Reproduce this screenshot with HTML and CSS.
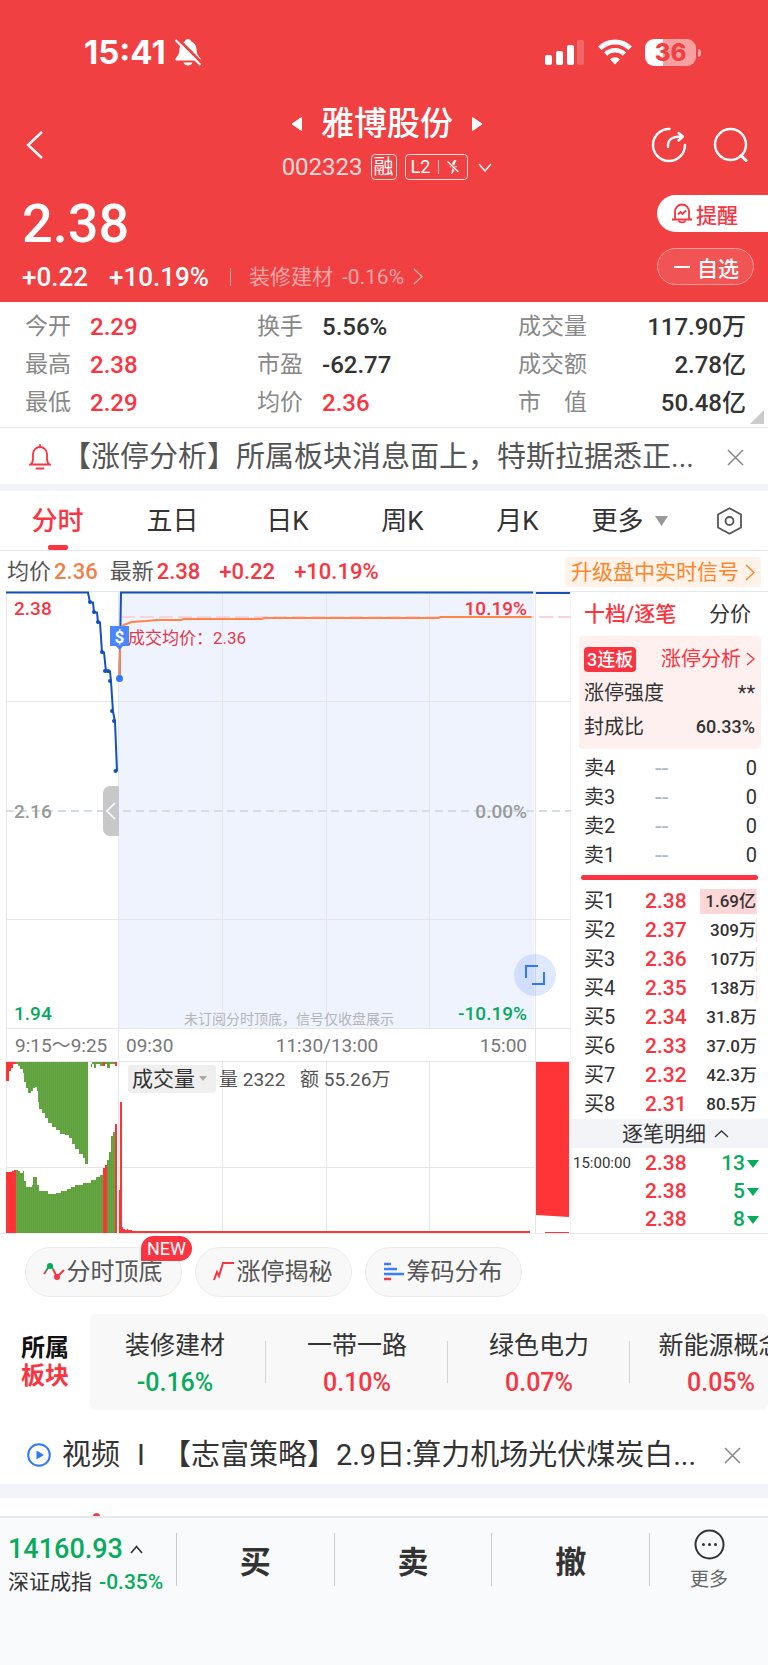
FILE: index.html
```html
<!DOCTYPE html>
<html lang="zh-CN">
<head>
    <meta charset="UTF-8">
    <meta name="viewport" content="width=device-width, initial-scale=1.0">
    <title>雅博股份 002323</title>
    <link rel="stylesheet" href="styles.css">
</head>
<body>
    <header class="header">
        <div class="status-bar">
            <div class="status-left">
                <span class="clock">15:41</span>
                <svg width="28" height="28" viewBox="0 0 28 28">
                    <path d="M14 1c-1.800 0-3 1.200-3.200 2.400C7 5 5.600 8 5.400 12c-.2 4-1.200 5.500-3.600 8-1 1-.6 2.500.8 2.500h22.800c1.400 0 1.800-1.500.8-2.500-2.400-2.500-3.400-4-3.600-8-.2-4-1.600-7-5.400-8.600C17 2.200 15.800 1 14 1z" fill="#fff"/>
                    <path d="M9.500 24.500h9c-.6 1.800-2.400 3-4.500 3s-3.900-1.200-4.500-3z" fill="#fff"/>
                    <path d="M3 0l25 25" stroke="#f04041" stroke-width="3"/>
                    <path d="M1.500 2l25 25" stroke="#fff" stroke-width="2.200"/>
                </svg>
            </div>
            <div class="status-right">
                <svg width="40" height="26" viewBox="0 0 40 26" fill="#fff">
                    <rect x="0" y="16" width="7" height="10" rx="2"/>
                    <rect x="11" y="12" width="7" height="14" rx="2"/>
                    <rect x="22" y="6" width="7" height="20" rx="2"/>
                    <rect x="32" y="1" width="7" height="25" rx="2" opacity=".2"/>
                </svg>
                <svg width="34" height="26" viewBox="0 0 34 26">
                    <path d="M1.800 9.200a21.500 21.500 0 0 1 30.400 0" fill="none" stroke="#fff" stroke-width="5"/>
                    <path d="M7.600 15.200a13.300 13.300 0 0 1 18.800 0" fill="none" stroke="#fff" stroke-width="4.600"/>
                    <path d="M17 25.500l-5-5.200a7 7 0 0 1 10 0z" fill="#fff"/>
                </svg>
                <div class="battery"><span>36</span></div>
            </div>
        </div>

        <nav class="nav">
            <button class="icon-btn" type="button" aria-label="返回">
                <svg width="18" height="30" viewBox="0 0 18 30"><path d="M16 2L2 15l14 13" fill="none" stroke="#fff" stroke-width="2.400"/></svg>
            </button>
            <div class="stock">
                <div class="stock-name">
                    <button class="icon-btn" type="button" aria-label="上一只">
                        <svg width="12" height="16" viewBox="0 0 12 16"><path d="M10.500 1.500v13L1 8z" fill="#fff" stroke="#fff" stroke-linejoin="round"/></svg>
                    </button>
                    <h1>雅博股份</h1>
                    <button class="icon-btn" type="button" aria-label="下一只">
                        <svg width="12" height="16" viewBox="0 0 12 16"><path d="M1.500 1.500v13L11 8z" fill="#fff" stroke="#fff" stroke-linejoin="round"/></svg>
                    </button>
                </div>
                <div class="stock-code">
                    <span>002323</span>
                    <span class="tag tag-margin">融</span>
                    <span class="tag tag-l2">L2
                        <i></i>
                        <svg width="12" height="16" viewBox="0 0 12 16"><path d="M7.500 1L3 8h3L4.500 15 9.500 7.500H6.500L9 1" fill="#fff" stroke="#fff" stroke-width=".6"/><path d="M.5 2.500l11 10.500" stroke="#f04041" stroke-width="3"/><path d="M.5 2.500l11 10.500" stroke="#fff" stroke-width="1.300"/></svg>
                    </span>
                    <svg width="14" height="9" viewBox="0 0 14 9"><path d="M1 1l6 7 6-7" fill="none" stroke="#fff" stroke-width="1.400"/></svg>
                </div>
            </div>
            <div class="nav-actions">
                <button class="icon-btn" type="button" aria-label="分享">
                    <svg width="36" height="36" viewBox="0 0 36 36" fill="none" stroke="#fff" stroke-width="2.400" stroke-linecap="round" stroke-linejoin="round">
                        <path d="M18.500 2A16 16 0 1 0 34 18"/>
                        <path d="M17 20c-.5-7 3-10.500 14-10.500M27.500 6l4.500 3.500-4.500 4"/>
                    </svg>
                </button>
                <button class="icon-btn" type="button" aria-label="搜索">
                    <svg width="36" height="36" viewBox="0 0 36 36" fill="none" stroke="#fff" stroke-width="2.400" stroke-linecap="round">
                        <circle cx="18.500" cy="17.500" r="15.500"/>
                        <path d="M29 28.500l5 5" stroke-width="3"/>
                    </svg>
                </button>
            </div>
        </nav>

        <div class="quote">
            <div class="quote-main">
                <div class="price">2.38</div>
                <div class="change">
                    <span>+0.22</span>
                    <span>+10.19%</span>
                    <a class="industry" href="#">装修建材 <span>-0.16%</span>
                        <svg width="10" height="17" viewBox="0 0 10 17"><path d="M1 1l8 7.500L1 16" fill="none" stroke="currentColor" stroke-width="1.500"/></svg>
                    </a>
                </div>
            </div>
            <div class="quote-actions">
                <button class="remind-btn" type="button">
                    <svg width="20" height="21" viewBox="0 0 20 21" fill="none" stroke="#f5353f" stroke-width="1.800">
                        <path d="M3 16V8.500a7 7 0 0 1 14 0V16M0 16.500h20"/>
                        <path d="M6.500 17.500c1 2.600 6 2.600 7 0M6 11.500l2.500-2.500 2 2 3.500-3.500"/>
                    </svg>
                    提醒
                </button>
                <button class="watch-btn" type="button"><i></i>自选</button>
            </div>
        </div>
    </header>

    <section class="stats">
        <dl>
            <dt>今开</dt><dd class="up">2.29</dd>
            <dt>最高</dt><dd class="up">2.38</dd>
            <dt>最低</dt><dd class="up">2.29</dd>
        </dl>
        <dl>
            <dt>换手</dt><dd>5.56%</dd>
            <dt>市盈</dt><dd>-62.77</dd>
            <dt>均价</dt><dd class="up">2.36</dd>
        </dl>
        <dl class="stats-right">
            <dt>成交量</dt><dd>117.90万</dd>
            <dt>成交额</dt><dd>2.78亿</dd>
            <dt>市　值</dt><dd>50.48亿</dd>
        </dl>
    </section>

    <section class="notice">
        <svg width="22" height="26" viewBox="0 0 22 26" fill="none" stroke="#fa3440" stroke-width="1.800" stroke-linecap="round">
            <path d="M1.500 20.500c2-1.500 2.500-3 2.500-6V10a7 7 0 0 1 14 0v4.500c0 3 .5 4.500 2.500 6zM11 1v2M7.500 24.500h7"/>
        </svg>
        <p>【涨停分析】所属板块消息面上，特斯拉据悉正...</p>
        <button class="icon-btn" type="button" aria-label="关闭">
            <svg width="17" height="17" viewBox="0 0 17 17"><path d="M1 1l15 15M16 1L1 16" stroke="#888" stroke-width="1.500"/></svg>
        </button>
    </section>

    <nav class="tabs">
        <button class="active" type="button">分时</button>
        <button type="button">五日</button>
        <button type="button">日K</button>
        <button type="button">周K</button>
        <button type="button">月K</button>
        <button type="button">更多<svg width="13" height="10" viewBox="0 0 13 10"><path d="M0 0h13L6.500 10z" fill="#999"/></svg></button>
        <button type="button" aria-label="设置">
            <svg width="27" height="28" viewBox="0 0 27 28" fill="none" stroke="#555" stroke-width="1.800">
                <path d="M13.500 1.200l11.500 6.300v13L13.500 26.800 2 20.500v-13z" stroke-linejoin="round"/>
                <circle cx="13.500" cy="14" r="4"/>
            </svg>
        </button>
    </nav>

    <div class="chart-info">
        <span>均价</span><b class="avg">2.36</b>
        <span>最新</span><b>2.38</b><b>+0.22</b><b>+10.19%</b>
        <a class="upgrade" href="#">升级盘中实时信号<svg width="10" height="17" viewBox="0 0 10 17"><path d="M1 1l8 7.500L1 16" fill="none" stroke="currentColor" stroke-width="1.500"/></svg></a>
    </div>

    <main class="board">
        <div class="chart">
            <svg class="chart-svg" viewBox="0 0 571 642">
                <defs>
                    <pattern id="bars" width="2" height="8" patternUnits="userSpaceOnUse">
                        <rect width="2" height="8" fill="#5d9f3b"/>
                        <rect width="1" height="8" fill="#68a745"/>
                    </pattern>
                </defs>
                <rect x="119" y="1" width="415" height="437" fill="#eff3fe"/>
                <!-- grid -->
                <path d="M6 .5h565M6 110.500h565M6 328.500h565M6 437.500h565M6 470.500h565M6 576.500h565M6.500 0v642M118.500 0v642M222.500 0v437M222.500 470v172M326.500 0v437M326.500 470v172M429.500 0v437M429.500 470v172M535.500 0v642M571 0v642" stroke="#e5e6e8" fill="none"/>
                <path d="M6 220h565" stroke="#d3dde8" stroke-width="2" stroke-dasharray="8 5"/>
                <path d="M121 26h450" stroke="#fad3da" stroke-width="2" stroke-dasharray="14 5"/>

                <!-- price lines -->
                <path d="M6 1.500h82l2 10h3l1 10h3l1 10h2l2 30h2l2 19h4l1 10 2 30 2 10 2 50" fill="none" stroke="#1450be" stroke-width="2"/>
                <g fill="#1450be">
                    <circle cx="90" cy="11" r="2"/><circle cx="94" cy="21" r="2"/><circle cx="98" cy="31" r="2"/>
                    <circle cx="102" cy="61" r="2"/><circle cx="105" cy="80" r="2"/><circle cx="108" cy="80" r="2"/>
                    <circle cx="110" cy="90" r="2"/><circle cx="112" cy="120" r="2"/><circle cx="114" cy="130" r="2"/>
                    <circle cx="115.500" cy="180" r="2"/>
                </g>
                <path d="M119.500 88L121 1.500h412M536 2h34" fill="none" stroke="#1450be" stroke-width="2"/>
                <path d="M119.500 86l1-45 3-7 8-3 15-1 10-1h25l2-1h78l3-1h174l2-1h91" fill="none" stroke="#ff8549" stroke-width="2"/>
                <circle cx="119.500" cy="87.500" r="3.500" fill="#2f78ff"/>

                <g class="axis-price">
                    <text x="14" y="24" class="t-up">2.38</text>
                    <text x="527" y="24" class="t-up" text-anchor="end">10.19%</text>
                    <text x="14" y="227">2.16</text>
                    <text x="527" y="227" text-anchor="end">0.00%</text>
                    <text x="14" y="429" class="t-down">1.94</text>
                    <text x="527" y="429" class="t-down" text-anchor="end">-10.19%</text>
                </g>
                <text x="128" y="53" class="t-deal">成交均价：2.36</text>
                <path d="M110 35h19v20h-6l-3.500 4-3.500-4h-6z" fill="#4a86ff"/>
                <text x="119.500" y="52" class="t-badge" text-anchor="middle">$</text>
                <text x="184" y="433" class="t-hint">未订阅分时顶底，信号仅收盘展示</text>
                <g class="axis-time">
                    <text x="15" y="461">9:15～9:25</text>
                    <text x="126" y="461">09:30</text>
                    <text x="327" y="461" text-anchor="middle">11:30/13:00</text>
                    <text x="527" y="461" text-anchor="end">15:00</text>
                </g>
                <text x="219" y="495" class="t-vol">量 2322</text>
                <text x="300" y="495" class="t-vol">额 55.26万</text>

                <!-- call auction volume -->
                <path d="M6 471h10v2h-3v4h-2v3h-2v10H6z" fill="#fe3436"/>
                <path d="M16 471v2h2v2h2v3h3v4h1v9h2v6h2v5h3v-2h2v-3h2v-1h2v4h1v11h1v7h3v4h3v5h3v5h4v4h4v3h4v4h5v1h4v3h3v6h3v5h4v5h4v4h2v6h3V471z" fill="url(#bars)"/>
                <path d="M89 471h3v5h-1v-3h3v4h2v-4h4v2h4v-2h3v4h3v-4h5v-2z" fill="#62a23f"/>
                <path d="M103 471h2v4h-2zM115 471h2v4h-2z" fill="#fe3436"/>
                <path d="M6 642v-61h6v-1h2v-1h2v63z" fill="#fe3436"/>
                <path d="M16 642v-63h2v1h2v2h3v-2h1v10h2v6h6v-2h1v-8h4v8h2v6h9v3h8v-1h5v-2h6v-2h4v-2h4v-2h8v-2h8v-3h5v-3h4v-2h3v65z" fill="url(#bars)"/>
                <path d="M103 642v-65h2v-3h2v68zM115 642V533h2v109z" fill="#fe3436"/>
                <path d="M107 642v-73h2v-8h2v-16h2v-4h2v101z" fill="url(#bars)"/>

                <!-- trading volume -->
                <path d="M119 642v-43h1v-88h2v125h1v2h2v1h2v-1h1v1h4v1h398v2z" fill="#fe3436"/>
                <path d="M536 471h33v155l-33-2zM545 641h24v1h-24z" fill="#fe3436"/>
            </svg>
            <button class="fold-btn" type="button" aria-label="收起集合竞价">
                <svg width="10" height="18" viewBox="0 0 10 18"><path d="M9 1L1 9l8 8" fill="none" stroke="#fff" stroke-width="1.600"/></svg>
            </button>
            <button class="full-btn" type="button" aria-label="全屏">
                <svg width="20" height="20" viewBox="0 0 20 20"><path d="M13 1H1v12M19 7v12H7" fill="none" stroke="#2f78ff" stroke-width="2"/></svg>
            </button>
            <label class="indicator">
                <select aria-label="指标">
                    <option>成交量</option>
                </select>
                <svg width="8" height="5" viewBox="0 0 8 5"><path d="M0 0h8L4 5z" fill="#aaa"/></svg>
            </label>
        </div>

        <aside class="book">
            <div class="book-tabs">
                <button class="active" type="button">十档/逐笔</button>
                <button type="button">分价</button>
            </div>
            <div class="limit-box">
                <div><span class="limit-tag">3连板</span>
                    <a href="#">涨停分析 <svg width="9" height="14" viewBox="0 0 9 14"><path d="M1 1l7 6-7 6" fill="none" stroke="currentColor" stroke-width="1.400"/></svg></a>
                </div>
                <div><span>涨停强度</span><span>**</span></div>
                <div><span>封成比</span><b>60.33%</b></div>
            </div>
            <table class="sell">
                <tr><th>卖4</th><td>--</td><td>0</td></tr>
                <tr><th>卖3</th><td>--</td><td>0</td></tr>
                <tr><th>卖2</th><td>--</td><td>0</td></tr>
                <tr><th>卖1</th><td>--</td><td>0</td></tr>
            </table>
            <div class="ratio-bar"></div>
            <table class="buy">
                <tr><th>买1</th><td>2.38</td><td><span class="big">1.69亿</span></td></tr>
                <tr><th>买2</th><td>2.37</td><td><span>309万</span></td></tr>
                <tr><th>买3</th><td>2.36</td><td><span>107万</span></td></tr>
                <tr><th>买4</th><td>2.35</td><td><span>138万</span></td></tr>
                <tr><th>买5</th><td>2.34</td><td>31.8万</td></tr>
                <tr><th>买6</th><td>2.33</td><td>37.0万</td></tr>
                <tr><th>买7</th><td>2.32</td><td>42.3万</td></tr>
                <tr><th>买8</th><td>2.31</td><td>80.5万</td></tr>
            </table>
            <button class="detail-btn" type="button">逐笔明细
                <svg width="15" height="8" viewBox="0 0 15 8"><path d="M1 7l6.500-6L14 7" fill="none" stroke="#333" stroke-width="1.300"/></svg>
            </button>
            <table class="ticks">
                <tr><th>15:00:00</th><td>2.38</td><td>13<i></i></td></tr>
                <tr><th></th><td>2.38</td><td>5<i></i></td></tr>
                <tr><th></th><td>2.38</td><td>8<i></i></td></tr>
            </table>
        </aside>
    </main>

    <div class="tools">
        <button type="button">
            <svg width="22" height="26" viewBox="0 0 22 26" fill="none" stroke-width="2">
                <path d="M1 15l2-3M10 10l4 8 7-7" stroke="#fa3440"/>
                <path d="M3 12l4-6 3 4" stroke="#07ab5c"/>
                <circle cx="7" cy="7" r="3" fill="#07ab5c"/><circle cx="14" cy="18" r="3" fill="#fa3440"/>
            </svg>分时顶底
            <em>NEW</em>
        </button>
        <button type="button">
            <svg width="22" height="26" viewBox="0 0 22 26"><path d="M1 21l3-8 2 4 4-13h11" fill="none" stroke="#fa3440" stroke-width="2"/></svg>涨停揭秘
        </button>
        <button type="button">
            <svg width="22" height="26" viewBox="0 0 22 26" fill="none" stroke-width="2.400">
                <path d="M1 5h7M1 10h13M1 15h20" stroke="#3a7dff"/>
                <path d="M1 20h7" stroke="#fa3440"/>
            </svg>筹码分布
        </button>
    </div>

    <section class="sectors">
        <h2>所属<br><span>板块</span></h2>
        <div class="sector-box">
            <ul>
                <li><a href="#">装修建材</a><b class="down">-0.16%</b></li>
                <li><a href="#">一带一路</a><b>0.10%</b></li>
                <li><a href="#">绿色电力</a><b>0.07%</b></li>
                <li><a href="#">新能源概念</a><b>0.05%</b></li>
            </ul>
        </div>
    </section>

    <section class="notice video">
        <svg width="24" height="24" viewBox="0 0 24 24"><circle cx="12" cy="12" r="10.800" fill="none" stroke="#2f78ff" stroke-width="2"/><path d="M9.500 7.500v9L17 12z" fill="#2f78ff"/></svg>
        <p><span>视频</span><span>I</span>【志富策略】2.9日:算力机场光伏煤炭白...</p>
        <button class="icon-btn" type="button" aria-label="关闭">
            <svg width="17" height="17" viewBox="0 0 17 17"><path d="M1 1l15 15M16 1L1 16" stroke="#888" stroke-width="1.500"/></svg>
        </button>
    </section>

    <div class="next-section"><i></i></div>

    <footer class="trade-bar">
        <a class="index" href="#">
            <span class="index-value">14160.93
                <svg width="13" height="9" viewBox="0 0 13 9"><path d="M1 8l5.500-6.500L12 8" fill="none" stroke="#333" stroke-width="1.600"/></svg>
            </span>
            <span class="index-name">深证成指 <b>-0.35%</b></span>
        </a>
        <button class="trade" type="button">买</button>
        <button class="trade" type="button">卖</button>
        <button class="trade" type="button">撤</button>
        <button class="more" type="button">
            <svg width="31" height="31" viewBox="0 0 31 31"><circle cx="15.500" cy="15.500" r="14" fill="none" stroke="#333" stroke-width="2"/><g fill="#333"><circle cx="9.500" cy="15.500" r="1.500"/><circle cx="15.500" cy="15.500" r="1.500"/><circle cx="21.500" cy="15.500" r="1.500"/></g></svg>
            更多
        </button>
    </footer>
</body>
</html>
```

FILE: styles.css
```css
* {
    margin: 0;
    padding: 0;
    box-sizing: border-box;
}

body {
    font-family: Roboto, "Noto Sans CJK SC", sans-serif;
    background: #fff;
    color: #333;
    min-height: 100vh;
    display: flex;
    flex-direction: column;
}

button, select {
    font: inherit;
    color: inherit;
    background: none;
    border: none;
    cursor: pointer;
}

a {
    color: inherit;
    text-decoration: none;
}

svg {
    display: block;
    flex: none;
}

b {
    font-weight: 500;
}

.icon-btn {
    display: flex;
    align-items: center;
}

/* Header */
.header {
    background: #f04041;
    color: #fff;
    height: 302px;
}

.status-bar {
    display: flex;
    justify-content: space-between;
    align-items: center;
    padding: 32px 66px 0 84px;
    height: 72px;
}

.status-left,
.status-right {
    display: flex;
    align-items: center;
}

.status-left {
    gap: 8px;
}

.status-right {
    gap: 13px;
}

.clock {
    font-family: Inter, sans-serif;
    font-size: 33px;
    font-weight: 700;
    line-height: 40px;
}

.battery {
    position: relative;
    width: 51px;
    height: 27px;
    margin-right: 6px;
    border-radius: 9px;
    background: linear-gradient(90deg, #fff 36%, #f8a0a0 36%);
    color: #f04041;
    font: 800 24px/27px Inter, sans-serif;
    text-align: center;
}

.battery::after {
    content: "";
    position: absolute;
    right: -5px;
    top: 10px;
    width: 3px;
    height: 8px;
    border-radius: 0 4px 4px 0;
    background: #f8a0a0;
}

.nav {
    display: grid;
    grid-template-columns: 1fr auto 1fr;
    align-items: center;
    height: 120px;
    padding: 26px 20px 0 26px;
}

.stock-name {
    display: flex;
    justify-content: center;
    align-items: center;
    gap: 18px;
}

.stock-name h1 {
    font-size: 33px;
    font-weight: 500;
    line-height: 44px;
}

.stock-code {
    display: flex;
    justify-content: center;
    align-items: center;
    gap: 8px;
    height: 42px;
    font-size: 24px;
    line-height: 42px;
}

.stock-code > span:first-child {
    opacity: 0.8;
}

.tag {
    display: flex;
    align-items: center;
    height: 26px;
    border: 1px solid rgba(255, 255, 255, 0.8);
    border-radius: 4px;
    line-height: 24px;
}

.tag-margin {
    padding: 0 2px;
    font-size: 20px;
}

.tag-l2 {
    gap: 8px;
    padding: 0 8px 0 5px;
    margin-right: 2px;
    font-size: 18px;
}

.tag-l2 i {
    width: 1px;
    height: 14px;
    background: rgba(255, 255, 255, 0.7);
}

.nav-actions {
    display: flex;
    justify-content: flex-end;
    gap: 25px;
}

.quote {
    display: flex;
    justify-content: space-between;
    padding-left: 22px;
}

.price {
    font-size: 54px;
    font-weight: 500;
    line-height: 64px;
}

.change {
    display: flex;
    align-items: center;
    gap: 21px;
    height: 41px;
    font-size: 26px;
    font-weight: 500;
    line-height: 40px;
}

.industry {
    display: flex;
    align-items: center;
    gap: 9px;
    padding-left: 18px;
    border-left: 1px solid rgba(255, 255, 255, 0.5);
    height: 18px;
    font-size: 21px;
    font-weight: 400;
    color: #f8a6a6;
}

.quote-actions {
    display: flex;
    flex-direction: column;
    gap: 16px;
    width: 111px;
    padding-top: 3px;
}

.remind-btn,
.watch-btn {
    display: flex;
    align-items: center;
    height: 37px;
    font-size: 21px;
    font-weight: 500;
}

.remind-btn {
    gap: 4px;
    padding-left: 15px;
    border-radius: 19px 0 0 19px;
    background: #fff;
    color: #f5353f;
}

.watch-btn {
    gap: 7px;
    width: 97px;
    padding-left: 16px;
    border: 1px solid #f79a9a;
    border-radius: 19px;
    background: #f15455;
}

.watch-btn i {
    width: 16px;
    height: 2px;
    background: #fff;
}

/* Stats */
.stats {
    position: relative;
    display: grid;
    grid-template-columns: 232fr 261fr 228fr;
    height: 126px;
    padding: 6px 22px 0 25px;
    border-bottom: 1px solid #e8e8ea;
}

.stats::after {
    content: "";
    position: absolute;
    right: 4px;
    bottom: 3px;
    border-left: 14px solid transparent;
    border-bottom: 14px solid #ccc;
}

.stats dl {
    display: grid;
    grid-template-columns: 65px 1fr;
    grid-auto-rows: 38px;
    align-items: center;
    line-height: 38px;
}

.stats dt {
    color: #888;
    font-size: 23px;
}

.stats dd {
    font-size: 24px;
    font-weight: 500;
}

.stats .stats-right {
    grid-template-columns: 80px 1fr;
}

.stats-right dd {
    text-align: right;
}

.stats .up {
    color: #fa3440;
}

/* Notice rows */
.notice {
    display: flex;
    align-items: center;
    height: 63px;
    padding: 2px 24px 0 29px;
    border-bottom: 7px solid #f3f4f9;
    color: #555;
}

.notice p {
    flex: 1;
    min-width: 0;
    overflow: hidden;
    padding-left: 11px;
    font-size: 29px;
    line-height: 48px;
    white-space: nowrap;
}

/* Period tabs */
.tabs {
    display: grid;
    grid-template-columns: repeat(6, 115fr) 78fr;
    height: 60px;
    border-bottom: 1px solid #e3e4e6;
}

.tabs button {
    display: flex;
    flex-direction: column;
    align-items: center;
    justify-content: center;
    font-size: 26px;
    line-height: 40px;
}

.tabs button:nth-child(6) {
    flex-direction: row;
    align-items: center;
    gap: 11px;
    padding-right: 6px;
}

.tabs .active {
    position: relative;
    color: #fa3440;
    font-weight: 500;
}

.tabs .active::after {
    content: "";
    position: absolute;
    bottom: 0;
    width: 20px;
    height: 5px;
    border-radius: 2px;
    background: #fa3440;
}

.chart-info {
    display: flex;
    align-items: center;
    height: 40px;
    padding: 2px 7px 0;
    font-size: 22px;
    line-height: 38px;
    color: #555;
}

.chart-info b {
    margin: 0 16px 0 3px;
    color: #fa3440;
}

.chart-info .avg {
    margin-right: 12px;
    color: #f08048;
}

.upgrade {
    display: flex;
    align-items: center;
    gap: 6px;
    height: 30px;
    margin-left: auto;
    padding: 0 6px;
    border-radius: 4px;
    background: #fff2e8;
    color: #ff8427;
    font-size: 21px;
}

/* Chart and order book */
.board {
    display: grid;
    grid-template-columns: minmax(0, 1fr) 197px;
    align-items: start;
    border-bottom: 1px solid #ececee;
}

.chart {
    position: relative;
}

.chart-svg {
    width: 100%;
}

.axis-price text {
    font-size: 19px;
    font-weight: 500;
    fill: #999;
}

.axis-price .t-up {
    fill: #fa3440;
}

.axis-price .t-down {
    fill: #07a862;
}

.axis-time text {
    font-size: 19px;
    fill: #777;
}

.t-deal {
    font-size: 17px;
    fill: #e03a4a;
}

.t-badge {
    font-size: 17px;
    font-weight: 700;
    fill: #fff;
}

.t-hint {
    font-size: 14px;
    fill: #b4b4b8;
}

.t-vol {
    font-size: 19px;
    fill: #555;
}

.fold-btn {
    position: absolute;
    left: 18%;
    top: 30.4%;
    display: flex;
    align-items: center;
    justify-content: center;
    width: 16px;
    height: 50px;
    border-radius: 7px 0 0 7px;
    background: #c8c8c8;
}

.full-btn {
    position: absolute;
    left: 90%;
    top: 56.5%;
    display: flex;
    align-items: center;
    justify-content: center;
    width: 42px;
    height: 42px;
    border-radius: 50%;
    background: rgba(70, 130, 255, 0.18);
}

.indicator {
    position: absolute;
    left: 22.4%;
    top: 73.8%;
    display: flex;
    align-items: center;
    gap: 4px;
    height: 28px;
    padding: 0 9px 0 4px;
    border-radius: 3px;
    background: #efefef;
}

.indicator select {
    appearance: none;
    font-size: 21px;
    line-height: 28px;
}

.book {
    border-top: 1px solid #e5e6e8;
    font-size: 20px;
}

.book-tabs {
    display: flex;
    justify-content: space-between;
    height: 43px;
    padding: 0 17px 0 13px;
}

.book-tabs button {
    font-size: 21px;
    line-height: 42px;
}

.book-tabs .active {
    color: #fa3440;
    font-weight: 500;
}

.limit-box {
    height: 113px;
    margin: 1px 7px 5px 8px;
    padding: 6px 6px 0 5px;
    border-radius: 4px;
    background: #fff0f0;
}

.limit-box div {
    display: flex;
    align-items: center;
    justify-content: space-between;
    height: 34px;
    line-height: 34px;
}

.limit-box a {
    display: flex;
    align-items: center;
    gap: 5px;
    color: #fa3440;
}

.limit-box b {
    font-size: 18px;
}

.limit-tag {
    padding: 0 3px;
    border-radius: 4px;
    background: #fa3440;
    color: #fff;
    font-size: 18px;
    font-weight: 500;
    line-height: 25px;
}

.book table {
    width: 100%;
    table-layout: fixed;
    border-collapse: collapse;
    line-height: 29px;
}

.book tr {
    height: 29px;
}

.book th {
    width: 74px;
    padding-left: 13px;
    font-weight: 400;
    text-align: left;
}

.book td {
    white-space: nowrap;
}

.book td:nth-child(2) {
    width: 46px;
    font-size: 21px;
    font-weight: 500;
    color: #fa3440;
}

.book td:last-child {
    padding-right: 11px;
    text-align: right;
}

.book .sell td:nth-child(2) {
    padding-left: 10px;
    font-size: 24px;
    font-weight: 400;
    color: #b0b8c0;
}

.buy td:last-child {
    font-size: 17px;
    font-weight: 500;
}

.buy td span {
    display: block;
    height: 25px;
    margin-left: 9px;
    border-right: 1px solid #ffdfe0;
    line-height: 25px;
}

.book .buy td .big {
    background: #fdd6d8;
}

.ratio-bar {
    height: 5px;
    margin: 5px 10px 7px;
    border-radius: 3px;
    background: #fa3440;
}

.detail-btn {
    display: flex;
    align-items: center;
    justify-content: center;
    gap: 8px;
    width: 100%;
    height: 29px;
    padding-left: 12px;
    background: #f2f4f8;
    font-size: 21px;
    line-height: 28px;
}

.book .ticks {
    margin-top: 1px;
    line-height: 28px;
}

.book .ticks tr {
    height: 28px;
}

.book .ticks th {
    padding-left: 2px;
    font-size: 15px;
}

.book .ticks td:last-child {
    padding-right: 9px;
    color: #07ab5c;
    font-size: 21px;
    font-weight: 500;
}

.ticks i {
    display: inline-block;
    margin-left: 2px;
    vertical-align: 2px;
    border: 6px solid transparent;
    border-top: 8px solid #07ab5c;
    border-bottom: 0;
}

/* Tool pills */
.tools {
    display: flex;
    gap: 13px;
    padding: 13px 25px 17px;
}

.tools button {
    position: relative;
    display: flex;
    align-items: center;
    justify-content: center;
    gap: 2px;
    width: 157px;
    height: 50px;
    padding-right: 2px;
    border: 1px solid #ebebeb;
    border-radius: 25px;
    background: #f8f8f8;
    color: #555;
    font-size: 24px;
    line-height: 46px;
}

.tools em {
    position: absolute;
    right: -11px;
    top: -12px;
    padding: 0 6px;
    border-radius: 13px 13px 13px 0;
    background: #fa3440;
    color: #fff;
    font-size: 18px;
    font-style: normal;
    line-height: 25px;
}

/* Sectors */
.sectors {
    display: flex;
    align-items: center;
    padding-left: 21px;
}

.sectors h2 {
    flex: none;
    width: 69px;
    font-size: 24px;
    line-height: 28px;
    color: #111;
}

.sectors h2 span {
    color: #fa3440;
}

.sector-box {
    flex: 1;
    min-width: 0;
    overflow: hidden;
    border-radius: 6px;
    background: #f8f8f8;
}

.sector-box ul {
    display: flex;
    margin-left: -6px;
    height: 96px;
    list-style: none;
}

.sector-box li {
    display: flex;
    flex: none;
    flex-direction: column;
    align-items: center;
    justify-content: center;
    width: 182px;
    padding-top: 3px;
    font-size: 25px;
    line-height: 37px;
    white-space: nowrap;
    background: linear-gradient(#d4d4d4, #d4d4d4) right center / 1px 42px no-repeat;
}

.sector-box b {
    color: #fa3440;
}

.sector-box .down {
    color: #07ab5c;
}

.video {
    height: 88px;
    padding: 16px 27px 0;
    border-bottom-width: 14px;
    color: #333;
}

.video span {
    margin-right: 17px;
}

.next-section {
    height: 18px;
    overflow: hidden;
    padding: 15px 0 0 93px;
}

.next-section i {
    display: block;
    width: 7px;
    height: 7px;
    border-radius: 50%;
    background: #e8414a;
}

/* Bottom bar */
.trade-bar {
    flex: 1;
    display: grid;
    grid-template-columns: 176px 1fr 1fr 1fr 119px;
    align-items: start;
    padding-top: 15px;
    border-top: 2px solid #e6e7ea;
    background: #f9fafc;
}

.trade-bar button {
    height: 53px;
    border-left: 1px solid #ccc;
}

.index {
    padding-left: 8px;
}

.index-value,
.index-name {
    display: flex;
    align-items: center;
    gap: 7px;
    line-height: 33px;
    white-space: nowrap;
}

.index-value {
    color: #07ab5c;
    font-size: 27px;
    font-weight: 500;
}

.index-name {
    font-size: 21px;
}

.index-name b {
    color: #07ab5c;
}

.trade-bar .trade {
    font-size: 31px;
    font-weight: 700;
}

.trade-bar .more {
    display: flex;
    flex-direction: column;
    align-items: center;
    justify-content: center;
    gap: 9px;
    color: #666;
    font-size: 19px;
    line-height: 22px;
}
```
